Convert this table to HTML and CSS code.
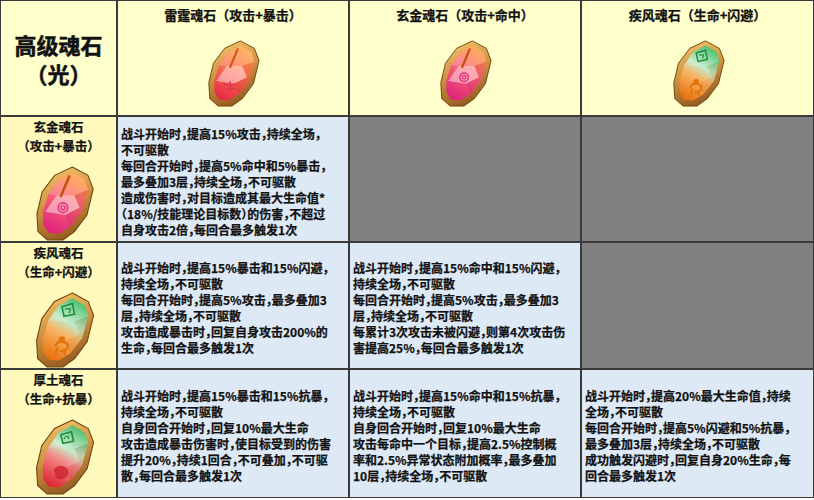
FILE: index.html
```html
<!DOCTYPE html>
<html lang="zh">
<head>
<meta charset="utf-8">
<title>高级魂石（光）</title>
<link rel="stylesheet" href="styles.css">
</head>
<body>
<svg class="defs" width="0" height="0" aria-hidden="true">
  <defs>
    <linearGradient id="rim" x1="0.2" y1="0" x2="0.5" y2="1">
      <stop offset="0" stop-color="#f2c66c"/>
      <stop offset="0.5" stop-color="#cf9140"/>
      <stop offset="1" stop-color="#93591f"/>
    </linearGradient>
    <linearGradient id="lei" x1="0.7" y1="0" x2="0.3" y2="1">
      <stop offset="0" stop-color="#ffa63e"/>
      <stop offset="0.4" stop-color="#ff7a56"/>
      <stop offset="1" stop-color="#e62a46"/>
    </linearGradient>
    <linearGradient id="xuan" x1="0.7" y1="0" x2="0.3" y2="1">
      <stop offset="0" stop-color="#ff9a30"/>
      <stop offset="0.4" stop-color="#fb6c72"/>
      <stop offset="1" stop-color="#e0247c"/>
    </linearGradient>
    <linearGradient id="ji" x1="0.7" y1="0" x2="0.3" y2="1">
      <stop offset="0" stop-color="#2cb658"/>
      <stop offset="0.38" stop-color="#bfeac6"/>
      <stop offset="0.58" stop-color="#f8b466"/>
      <stop offset="1" stop-color="#ea7410"/>
    </linearGradient>
    <linearGradient id="hou" x1="0.7" y1="0" x2="0.3" y2="1">
      <stop offset="0" stop-color="#2fb256"/>
      <stop offset="0.38" stop-color="#c6ecc8"/>
      <stop offset="0.58" stop-color="#f48a88"/>
      <stop offset="1" stop-color="#de2a36"/>
    </linearGradient>
  </defs>
</svg>

<div class="table">
  <!-- header row -->
  <div class="cell corner">
    <div class="corner-title">高级魂石<br>（光）</div>
  </div>

  <div class="cell head">
    <div class="head-title">雷霆魂石（攻击+暴击）</div>
    <svg class="gem gem-head" viewBox="0 0 60 72">
      <path d="M38 1L53 9L58 22L52 47L40 63L29 71L14 71L5 63L4 46L9 25L21 9Z" fill="url(#rim)" stroke="#6e4212" stroke-width="1"/>
      <path d="M38 6L50 13L53 23L47 44L36 58L25 65L15 64L10 56L10 44L15 27L25 13Z" fill="url(#lei)"/>
      <path d="M15 27L25 13L38 6L50 13L53 23L40 28L23 28Z" fill="#fff" opacity=".2"/>
      <path d="M23 28L40 28L45 40L31 47L12 44Z" fill="#fff" opacity=".45"/>
      <path d="M40 28L53 23L47 44L36 58L31 47L45 40Z" fill="#900" opacity=".12"/>
      <path d="M35 10L27 29" stroke="#d6561a" stroke-width="2.4" stroke-linecap="round"/>
      <path d="M21 48h11M23 52h9M27 45v10" stroke="#e03848" stroke-width="1.8" stroke-linecap="round" fill="none"/>
    </svg>
  </div>

  <div class="cell head">
    <div class="head-title">玄金魂石（攻击+命中）</div>
    <svg class="gem gem-head" viewBox="0 0 60 72">
      <path d="M38 1L53 9L58 22L52 47L40 63L29 71L14 71L5 63L4 46L9 25L21 9Z" fill="url(#rim)" stroke="#6e4212" stroke-width="1"/>
      <path d="M38 6L50 13L53 23L47 44L36 58L25 65L15 64L10 56L10 44L15 27L25 13Z" fill="url(#xuan)"/>
      <path d="M15 27L25 13L38 6L50 13L53 23L40 28L23 28Z" fill="#fff" opacity=".2"/>
      <path d="M23 28L40 28L45 40L31 47L12 44Z" fill="#fff" opacity=".45"/>
      <path d="M40 28L53 23L47 44L36 58L31 47L45 40Z" fill="#800040" opacity=".12"/>
      <path d="M35 10L27 29" stroke="#c8500e" stroke-width="2.4" stroke-linecap="round"/>
      <circle cx="29" cy="40" r="4.6" fill="none" stroke="#e0307e" stroke-width="1.5"/>
      <circle cx="29" cy="40" r="2" fill="none" stroke="#e0307e" stroke-width="1.3"/>
    </svg>
  </div>

  <div class="cell head">
    <div class="head-title">疾风魂石（生命+闪避）</div>
    <svg class="gem gem-head" viewBox="0 0 60 72">
      <path d="M38 1L53 9L58 22L52 47L40 63L29 71L14 71L5 63L4 46L9 25L21 9Z" fill="url(#rim)" stroke="#6e4212" stroke-width="1"/>
      <path d="M38 6L50 13L53 23L47 44L36 58L25 65L15 64L10 56L10 44L15 27L25 13Z" fill="url(#ji)"/>
      <path d="M15 27L25 13L38 6L50 13L53 23L40 28L23 28Z" fill="#fff" opacity=".15"/>
      <path d="M40 28L53 23L47 44L36 58L31 47L45 40Z" fill="#a04000" opacity=".12"/>
      <path d="M28 14L38 11L40 21L30 23Z" fill="none" stroke="#1d8a3e" stroke-width="1.5"/>
      <path d="M31 16L36 16L35 20" fill="none" stroke="#1d8a3e" stroke-width="1.1"/>
      <circle cx="28" cy="45" r="3" fill="#e2740e"/>
      <path d="M22 51C24 45 30 47 33 49C35 53 31 57 27 56M24 53l-2 5M30 55l1 4" stroke="#e2740e" stroke-width="2" fill="none" stroke-linecap="round"/>
    </svg>
  </div>

  <!-- row 1 -->
  <div class="cell label">
    <div class="label-title"><span class="line">玄金魂石</span><span class="line">（攻击+暴击）</span></div>
    <svg class="gem gem-side" viewBox="0 0 60 72">
      <path d="M38 1L53 9L58 22L52 47L40 63L29 71L14 71L5 63L4 46L9 25L21 9Z" fill="url(#rim)" stroke="#6e4212" stroke-width="1"/>
      <path d="M38 6L50 13L53 23L47 44L36 58L25 65L15 64L10 56L10 44L15 27L25 13Z" fill="url(#xuan)"/>
      <path d="M15 27L25 13L38 6L50 13L53 23L40 28L23 28Z" fill="#fff" opacity=".2"/>
      <path d="M23 28L40 28L45 40L31 47L12 44Z" fill="#fff" opacity=".45"/>
      <path d="M40 28L53 23L47 44L36 58L31 47L45 40Z" fill="#800040" opacity=".12"/>
      <path d="M35 10L27 29" stroke="#c8500e" stroke-width="2.4" stroke-linecap="round"/>
      <circle cx="29" cy="40" r="4.6" fill="none" stroke="#e0307e" stroke-width="1.5"/>
      <circle cx="29" cy="40" r="2" fill="none" stroke="#e0307e" stroke-width="1.3"/>
    </svg>
  </div>
  <div class="cell desc">
    <p>战斗开始时，提高15%攻击，持续全场，<br>不可驱散<br>每回合开始时，提高5%命中和5%暴击，<br>最多叠加3层，持续全场，不可驱散<br>造成伤害时，对目标造成其最大生命值*<br>（18%/技能理论目标数）的伤害，不超过<br>自身攻击2倍，每回合最多触发1次</p>
  </div>
  <div class="cell gray"></div>
  <div class="cell gray"></div>

  <!-- row 2 -->
  <div class="cell label">
    <div class="label-title"><span class="line">疾风魂石</span><span class="line">（生命+闪避）</span></div>
    <svg class="gem gem-side" viewBox="0 0 60 72">
      <path d="M38 1L53 9L58 22L52 47L40 63L29 71L14 71L5 63L4 46L9 25L21 9Z" fill="url(#rim)" stroke="#6e4212" stroke-width="1"/>
      <path d="M38 6L50 13L53 23L47 44L36 58L25 65L15 64L10 56L10 44L15 27L25 13Z" fill="url(#ji)"/>
      <path d="M15 27L25 13L38 6L50 13L53 23L40 28L23 28Z" fill="#fff" opacity=".15"/>
      <path d="M40 28L53 23L47 44L36 58L31 47L45 40Z" fill="#a04000" opacity=".12"/>
      <path d="M28 14L38 11L40 21L30 23Z" fill="none" stroke="#1d8a3e" stroke-width="1.5"/>
      <path d="M31 16L36 16L35 20" fill="none" stroke="#1d8a3e" stroke-width="1.1"/>
      <circle cx="28" cy="45" r="3" fill="#e2740e"/>
      <path d="M22 51C24 45 30 47 33 49C35 53 31 57 27 56M24 53l-2 5M30 55l1 4" stroke="#e2740e" stroke-width="2" fill="none" stroke-linecap="round"/>
    </svg>
  </div>
  <div class="cell desc">
    <p>战斗开始时，提高15%暴击和15%闪避，<br>持续全场，不可驱散<br>每回合开始时，提高5%攻击，最多叠加3<br>层，持续全场，不可驱散<br>攻击造成暴击时，回复自身攻击200%的<br>生命，每回合最多触发1次</p>
  </div>
  <div class="cell desc">
    <p>战斗开始时，提高15%命中和15%闪避，<br>持续全场，不可驱散<br>每回合开始时，提高5%攻击，最多叠加3<br>层，持续全场，不可驱散<br>每累计3次攻击未被闪避，则第4次攻击伤<br>害提高25%，每回合最多触发1次</p>
  </div>
  <div class="cell gray"></div>

  <!-- row 3 -->
  <div class="cell label">
    <div class="label-title"><span class="line">厚土魂石</span><span class="line">（生命+抗暴）</span></div>
    <svg class="gem gem-side" viewBox="0 0 60 72">
      <path d="M38 1L53 9L58 22L52 47L40 63L29 71L14 71L5 63L4 46L9 25L21 9Z" fill="url(#rim)" stroke="#6e4212" stroke-width="1"/>
      <path d="M38 6L50 13L53 23L47 44L36 58L25 65L15 64L10 56L10 44L15 27L25 13Z" fill="url(#hou)"/>
      <path d="M15 27L25 13L38 6L50 13L53 23L40 28L23 28Z" fill="#fff" opacity=".15"/>
      <path d="M40 28L53 23L47 44L36 58L31 47L45 40Z" fill="#900" opacity=".12"/>
      <path d="M27 15L37 12L39 21L29 23Z" fill="none" stroke="#1d8a3e" stroke-width="1.5"/>
      <path d="M30 19C32 15 35 16 34 19" fill="none" stroke="#1d8a3e" stroke-width="1.1"/>
      <path d="M20 49C22 43 30 43 33 47C36 51 33 57 27 57C23 57 21 54 22 52" fill="#c92028" opacity=".75"/>
    </svg>
  </div>
  <div class="cell desc">
    <p>战斗开始时，提高15%暴击和15%抗暴，<br>持续全场，不可驱散<br>自身回合开始时，回复10%最大生命<br>攻击造成暴击伤害时，使目标受到的伤害<br>提升20%，持续1回合，不可叠加，不可驱<br>散，每回合最多触发1次</p>
  </div>
  <div class="cell desc">
    <p>战斗开始时，提高15%命中和15%抗暴，<br>持续全场，不可驱散<br>自身回合开始时，回复10%最大生命<br>攻击每命中一个目标，提高2.5%控制概<br>率和2.5%异常状态附加概率，最多叠加<br>10层，持续全场，不可驱散</p>
  </div>
  <div class="cell desc">
    <p>战斗开始时，提高20%最大生命值，持续<br>全场，不可驱散<br>每回合开始时，提高5%闪避和5%抗暴，<br>最多叠加3层，持续全场，不可驱散<br>成功触发闪避时，回复自身20%生命，每<br>回合最多触发1次</p>
  </div>
</div>
</body>
</html>
```

FILE: styles.css
```css
* { box-sizing: border-box; }

html, body {
  margin: 0;
  padding: 0;
  background: #ffffff;
}

body {
  font-family: "Noto Sans CJK SC", "Noto Sans", sans-serif;
  color: #111;
  font-weight: 700;
  -webkit-text-stroke: 0.25px #111;
}

.defs {
  position: absolute;
  width: 0;
  height: 0;
  overflow: hidden;
}

.table {
  display: grid;
  grid-template-columns: 115px 230px 230px 231px;
  grid-template-rows: 114px 124px 125px 127px;
  gap: 2px;
  padding: 1px;
  background: #3a3a3a;
  width: max-content;
}

.corner {
  background: #ffffcc;
  display: flex;
  align-items: center;
  justify-content: center;
}

.corner-title {
  font-size: 22px;
  line-height: 29px;
  text-align: center;
  padding-top: 2px;
  -webkit-text-stroke: 0.5px #111;
}

.head {
  background: #ffffcc;
  display: flex;
  flex-direction: column;
  align-items: center;
  padding-top: 6px;
}

.head-title {
  font-size: 13px;
  line-height: 16px;
  white-space: nowrap;
}

.gem {
  display: block;
}

.gem-head {
  width: 56px;
  height: 67px;
  margin-top: 17px;
}

.label {
  background: #fff9bc;
  display: flex;
  flex-direction: column;
  align-items: center;
  padding-top: 1px;
}

.label-title {
  display: flex;
  flex-direction: column;
  align-items: center;
  font-size: 12.5px;
  white-space: nowrap;
}

.label-title .line {
  display: block;
  line-height: 18.5px;
}

.gem-side {
  width: 64px;
  height: 76px;
  margin-top: 11px;
  margin-left: 10px;
}

.desc {
  background: #dde9f5;
  display: flex;
  align-items: center;
  padding: 5px 0 0 3px;
}

.desc p {
  margin: 0;
  font-size: 12px;
  line-height: 16px;
  white-space: nowrap;
  font-feature-settings: "halt";
  word-spacing: 0;
}

.gray {
  background: #808080;
}
```
